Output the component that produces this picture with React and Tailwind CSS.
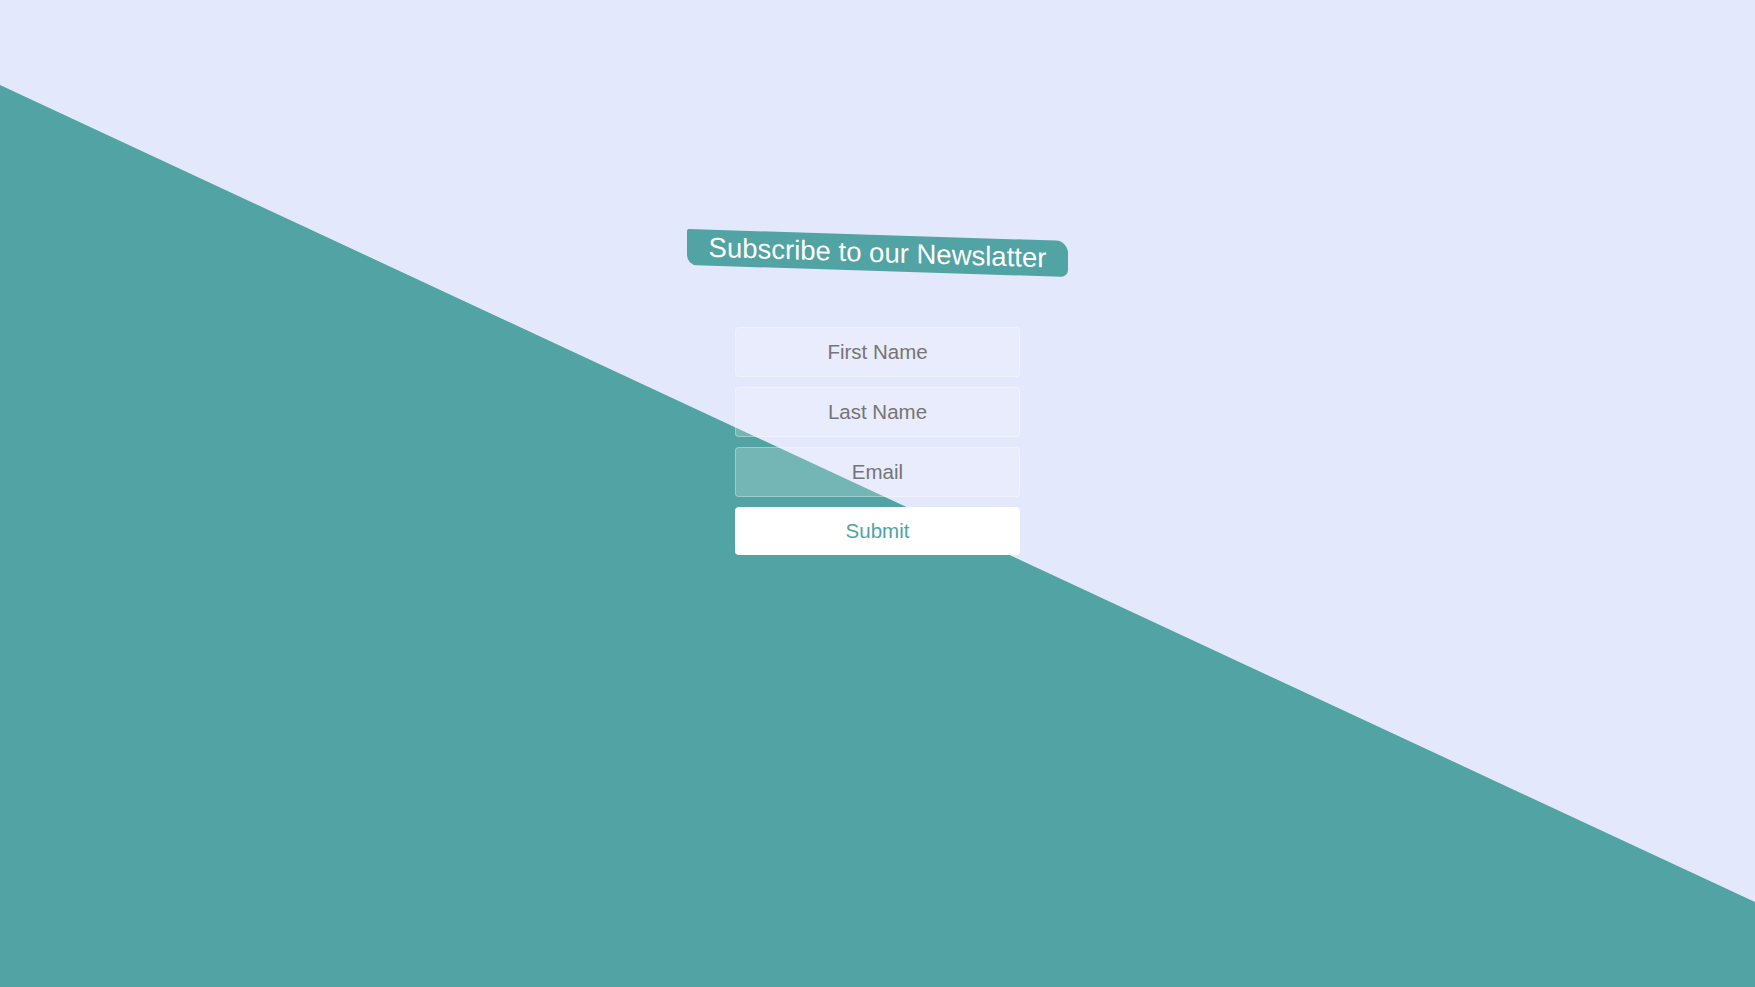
import { useState } from 'react';

const FIELDS = [
    { name: 'firstName', placeholder: 'First Name', type: 'text' },
    { name: 'lastName', placeholder: 'Last Name', type: 'text' },
    { name: 'email', placeholder: 'Email', type: 'email' }
];

export default function App() {
    const [form, setForm] = useState({ firstName: '', lastName: '', email: '' });

    const onChange = (e) => setForm({ ...form, [e.target.name]: e.target.value });
    const onSubmit = (e) => { e.preventDefault(); };

    return (
        <div className="relative min-h-[987px] w-full overflow-hidden bg-[#e4e8fc] font-['Liberation_Sans',Arial,sans-serif]">
            {/* Diagonal teal backdrop */}
            <div className="absolute inset-0 bg-[#52a3a3] [clip-path:polygon(0_85px,100%_902px,100%_100%,0_100%)]" />

            <div className="relative flex flex-col items-center pt-[235px]">
                {/* Brush-stroke title */}
                <div className="flex h-[36px] w-[381px] skew-y-[1.8deg] items-center justify-center rounded-tl-[2px] rounded-tr-[12px] rounded-br-[7px] rounded-bl-[10px] bg-[#52a3a3]">
                    <h1 className="text-[27.5px] leading-none text-white">Subscribe to our Newslatter</h1>
                </div>

                {/* Form */}
                <form onSubmit={onSubmit} className="mt-[56px] flex w-[285px] flex-col gap-[10px]">
                    {FIELDS.map(f => (
                        <input
                            key={f.name}
                            name={f.name}
                            type={f.type}
                            value={form[f.name]}
                            onChange={onChange}
                            placeholder={f.placeholder}
                            className="h-[50px] w-full rounded-[4px] border border-white/30 bg-white/20 text-center text-[20.5px] text-[#555] outline-none placeholder:text-[#757575]"
                        />
                    ))}
                    <button type="submit" className="h-[48px] w-full rounded-[4px] bg-white text-[20.5px] text-[#52a3a3]">
                        Submit
                    </button>
                </form>
            </div>
        </div>
    );
}
